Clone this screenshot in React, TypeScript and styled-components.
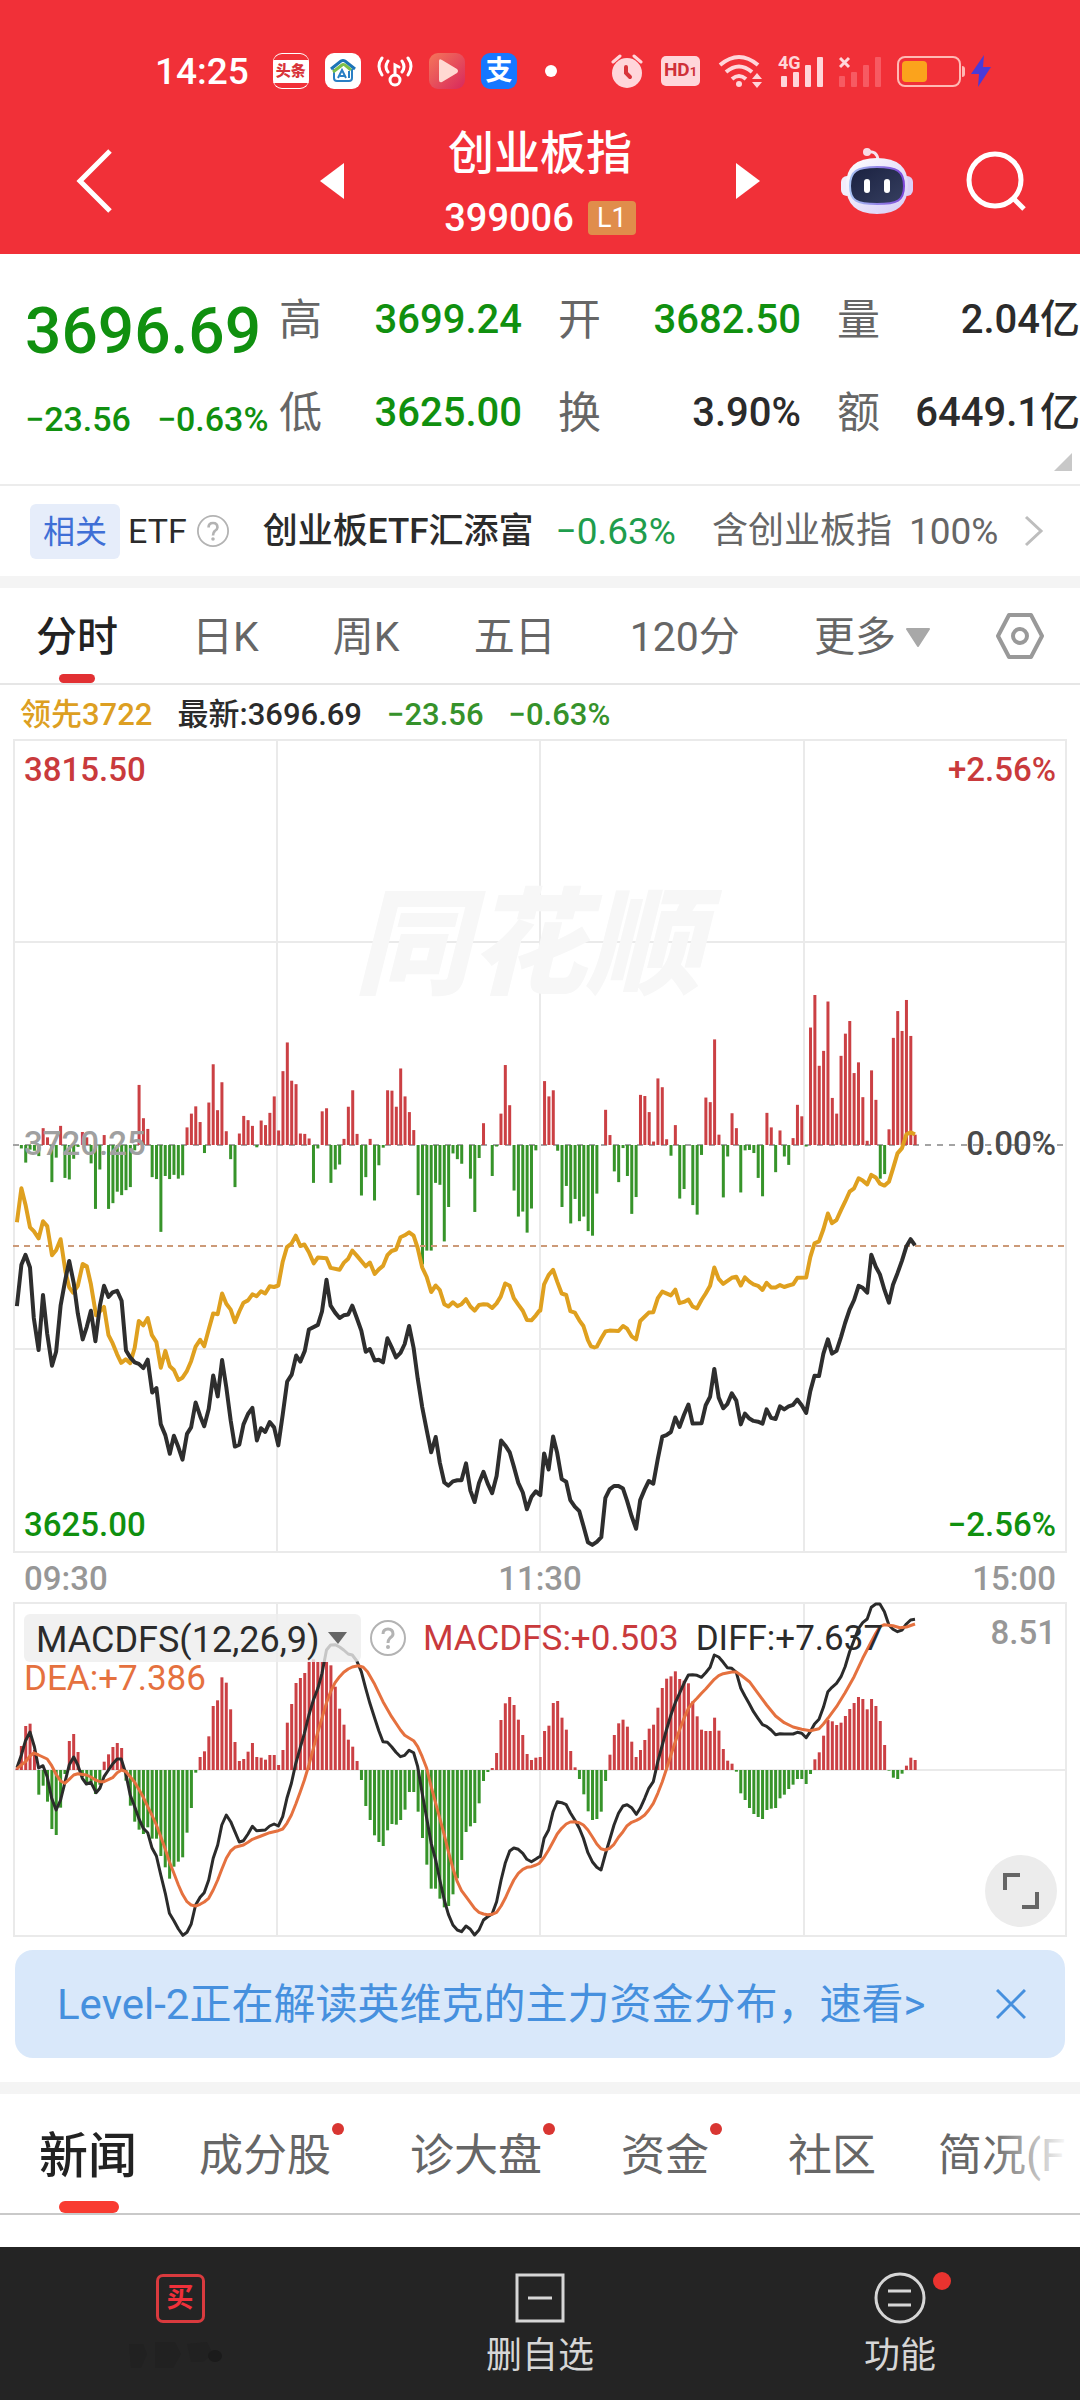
import React from "react";
import styled, { createGlobalStyle } from "styled-components";

const GlobalStyle = createGlobalStyle`
  *, *::before, *::after { box-sizing: border-box; }
  body {
    margin: 0;
    background: #fff;
    color: #2b2b2b;
    font-family: Roboto, "Noto Sans CJK SC", sans-serif;
    line-height: 1;
  }
  button, select, a { font: inherit; color: inherit; }
  button { border: 0; padding: 0; margin: 0; background: none; cursor: pointer; }
  a { text-decoration: none; }
  svg { display: block; flex: none; }
`;

const UP = "#c93a3c";
const DOWN = "#10900f";

/* ---------- chart data ---------- */

// One value per trading minute, in the units of the source feed.
const FLOW = [
  0, -9, -46, -12, -15, -29, 44, 20, -97, -33, 50, -86, -90, -36, -5, 34, 20, -48, -167, -64,
  26, -167, -152, -122, -131, -118, -110, -14, 157, 70, 42, -84, -89, -227, -81, -89, -78, -88, -79, 46,
  82, 101, 60, -21, 111, 211, 91, 164, 36, -37, -110, 30, 76, 65, 50, -6, 64, 52, 84, 127,
  38, 193, 268, 168, 159, 30, 29, 17, -99, -9, 88, 96, -99, -64, -51, 16, 100, 143, 29, -132,
  -84, 16, -145, -53, -7, 143, 142, 100, 200, 127, 86, 39, -131, -312, -276, -276, -99, -104, -252, -162,
  -22, -37, -49, 0, -88, -175, -34, 57, 0, -81, -4, 82, 209, 104, -119, -187, -174, -229, -166, -14,
  0, 167, 127, 143, -15, -162, -107, -205, -141, -199, -187, -225, -237, -127, 0, 92, 26, -69, -97, -8,
  -81, -180, -136, 131, 128, 86, 9, 174, 151, 15, -28, 52, -140, -115, 0, -157, -182, -26, 124, 112,
  276, 27, -137, -30, 83, 44, -124, -14, -13, -21, -86, -134, 84, 46, -71, 38, -30, -52, 18, 105,
  75, -4, 307, 392, 207, 246, 375, 123, 82, 233, 291, 324, 188, 216, 125, 11, 195, 118, -88, -76,
  41, 280, 350, 298, 379, 285, 27,
];

const MACD = [
  5, 72, 132, 139, 60, -74, -47, -95, -177, -195, -113, -12, 87, 108, 54, -22, -45, -38, -72, -44,
  25, 47, 69, 81, 66, -32, -107, -155, -179, -192, -172, -206, -206, -258, -292, -326, -290, -275, -262, -188,
  -114, -8, 39, 56, 101, 192, 209, 278, 262, 182, 84, 27, 33, 55, 81, 39, 37, 31, 45, 45,
  15, 60, 142, 198, 261, 276, 291, 324, 332, 324, 324, 324, 314, 250, 184, 136, 91, 70, 27, -30,
  -108, -150, -196, -216, -228, -181, -162, -164, -150, -119, -66, -66, -125, -204, -284, -356, -356, -386, -412, -408,
  -373, -325, -270, -186, -169, -159, -100, -33, -6, 6, 51, 150, 200, 219, 195, 151, 105, 48, 30, 37,
  39, 117, 133, 201, 207, 157, 121, 57, 8, -27, -73, -124, -150, -147, -125, -33, 46, 105, 140, 151,
  130, 85, 39, 60, 90, 124, 136, 187, 246, 274, 281, 296, 273, 268, 260, 206, 161, 121, 117, 117,
  157, 118, 63, 28, 19, -5, -70, -90, -114, -132, -141, -147, -120, -116, -114, -85, -74, -57, -44, -27,
  -27, -42, -12, 32, 53, 103, 150, 146, 135, 142, 162, 183, 201, 219, 213, 182, 213, 192, 147, 75,
  -2, -23, -27, -11, 13, 37, 30,
];

// Each line is kept as a morning half and an afternoon half of "x,y" pairs.
const LEAD: [string, string] = [
  "49,662 62,573 74,616 87,675 98,685 112,704 125,659 137,672 151,748 163,735 176,706 190,790 201,832 212,846 226,828 240,771 252,777 264,824 279,905 290,895 302,883 315,957 327,978 340,1007 352,1029 365,1020 378,1030 391,990 403,920 416,931 429,912 441,957 454,975 467,1042 480,998 493,1038 505,1048 518,1074 530,1068 543,1050 555,1025 568,987 581,969 593,986 606,942 619,900 632,902 645,848 657,875 670,890 682,923 695,895 707,872 720,866 733,850 745,855 758,842 770,848 783,829 796,831 808,827 821,765 833,727 846,718 859,697 872,724 884,720 897,740 911,769 923,754 948,756 960,781 986,786 998,768 1011,757 1023,736 1036,749 1062,777 1074,767 1088,797 1100,785 1112,776 1125,748 1137,737 1150,733 1163,701 1175,696 1188,688 1201,697 1213,729 1226,780 1239,805 1252,844 1265,827 1277,839 1290,876 1302,882 1315,871 1328,881 1340,876 1353,863 1366,882 1378,893 1391,878 1404,876 1416,877 1429,886 1442,874 1454,856 1467,822 1480,828 1492,860 1505,877 1518,893 1530,917 1543,918 1556,905 1566,893",
  "1,893 12,824 25,800 38,786 50,817 63,848 76,852 88,894 101,898 114,918 126,933 139,970 148,986 158,989 165,987 178,965 190,947 202,945 228,946 241,933 253,940 266,960 279,968 291,920 316,898 329,897 342,860 355,843 380,853 393,838 405,873 418,870 431,864 443,882 456,887 469,865 481,848 494,828 506,780 519,810 532,823 557,807 570,804 583,827 595,806 608,817 620,824 633,828 646,839 658,820 671,832 684,832 697,826 709,831 722,827 735,824 747,807 773,806 785,753 797,717 810,712 823,680 836,639 848,664 861,656 874,630 886,608 899,582 912,573 925,547 937,553 950,563 962,538 975,545 987,561 1000,566 1013,556 1025,522 1038,482 1051,468 1064,432 1076,427 1089,432",
];
const PRICE: [string, string] = [
  "49,881 62,773 74,747 87,780 98,912 112,996 125,852 137,953 151,1037 163,1000 176,880 189,815 201,763 214,820 226,900 240,968 252,935 264,893 277,973 290,880 302,828 315,857 327,845 340,841 353,867 366,997 378,1015 391,1028 403,1032 416,1043 429,1021 442,1107 454,1095 467,1190 480,1218 493,1267 505,1220 518,1250 530,1282 543,1215 555,1198 568,1133 581,1168 593,1195 606,1150 619,1062 632,1117 645,1022 657,1093 670,1180 682,1248 695,1243 707,1190 720,1163 733,1147 746,1232 758,1200 770,1210 783,1184 796,1198 808,1245 821,1165 834,1078 847,1060 860,1010 872,1026 885,998 897,942 923,930 935,895 948,812 960,880 973,898 986,912 998,905 1011,903 1023,880 1036,912 1049,945 1062,1000 1074,993 1088,1023 1100,1021 1112,1028 1125,965 1137,988 1150,1015 1163,1003 1175,980 1188,933 1201,990 1213,1070 1226,1145 1239,1205 1252,1263 1265,1223 1277,1290 1290,1342 1302,1350 1315,1339 1328,1336 1340,1336 1353,1292 1366,1363 1378,1393 1391,1343 1404,1314 1416,1345 1429,1370 1442,1325 1455,1232 1467,1245 1480,1263 1492,1300 1505,1343 1518,1368 1530,1412 1543,1380 1556,1365 1566,1373",
  "1,1375 12,1266 25,1308 38,1222 50,1265 63,1333 76,1340 88,1388 101,1405 114,1417 126,1455 139,1498 152,1505 165,1497 178,1485 190,1382 202,1360 215,1351 228,1351 241,1358 253,1390 266,1430 279,1463 291,1388 304,1360 316,1338 329,1345 342,1280 355,1222 367,1218 380,1210 393,1172 405,1197 418,1165 431,1138 443,1188 469,1187 481,1140 494,1118 506,1045 519,1120 532,1148 544,1137 557,1109 570,1128 583,1190 595,1162 608,1175 620,1181 633,1183 646,1188 658,1151 671,1173 684,1176 697,1143 709,1151 722,1143 735,1139 747,1125 760,1140 773,1160 785,1103 797,1063 810,1064 823,1005 836,968 848,1005 861,998 874,962 886,925 899,890 912,865 925,828 937,833 950,846 962,747 975,778 987,798 1000,838 1013,872 1025,825 1038,795 1051,762 1064,725 1076,706 1089,722",
];
const DIFF: [string, string] = [
  "49,803 62,765 74,722 87,696 100,740 112,804 125,797 137,830 150,895 163,930 176,900 188,850 201,795 214,771 226,795 239,835 251,852 264,847 279,878 290,865 302,830 315,810 327,792 340,777 352,777 365,820 378,885 391,920 403,955 416,985 429,998 441,1043 454,1068 467,1125 480,1180 492,1240 505,1262 518,1287 531,1306 543,1297 555,1273 568,1215 581,1192 593,1178 606,1140 619,1075 632,1035 644,975 657,945 670,965 682,995 695,1026 707,1022 720,1002 733,979 745,992 770,990 783,978 796,972 808,978 821,950 833,895 846,850 859,790 872,742 884,700 897,645 910,600 923,565 935,520 948,450 960,435 973,434 986,441 998,450 1011,462 1023,465 1036,483 1049,515 1062,565 1074,610 1088,655 1100,692 1112,725 1125,727 1137,740 1150,757 1163,770 1175,766 1188,751 1201,758 1213,800 1226,880 1239,955 1252,1030 1265,1080 1277,1140 1290,1200 1302,1243 1315,1275 1328,1290 1340,1295 1353,1278 1366,1288 1378,1305 1391,1290 1404,1260 1416,1250 1429,1242 1442,1205 1455,1140 1467,1090 1480,1053 1492,1044 1505,1048 1518,1060 1530,1078 1543,1085 1556,1077 1566,1070",
  "1,1070 12,1015 25,990 38,935 50,905 63,908 76,914 88,938 101,960 114,985 126,1015 139,1058 152,1085 165,1102 177,1110 190,1062 202,1020 215,975 228,940 241,918 253,914 266,923 280,943 291,925 304,895 316,865 329,845 342,785 355,735 367,690 380,645 393,608 405,580 418,550 431,525 443,524 456,526 469,532 481,518 494,502 506,465 519,471 532,487 544,503 557,505 570,517 583,565 595,588 608,612 620,635 633,655 646,674 658,679 671,690 684,704 697,701 709,702 735,702 747,697 760,700 773,713 785,695 797,672 810,658 823,622 836,575 848,562 861,550 874,530 886,500 899,455 912,420 925,385 937,368 950,357 962,322 975,312 987,312 1000,335 1013,375 1025,388 1038,395 1051,390 1064,372 1076,360 1089,358",
];
const DEA: [string, string] = [
  "49,806 74,785 87,768 98,759 112,765 137,777 150,797 163,823 176,843 188,850 201,838 214,825 226,821 251,825 264,831 277,840 290,845 302,845 327,833 340,818 353,810 366,815 378,830 391,847 403,868 416,892 429,920 441,945 454,975 467,1010 480,1048 492,1085 505,1120 518,1155 530,1183 543,1205 555,1215 568,1218 581,1213 593,1206 606,1195 619,1170 632,1140 644,1108 657,1075 670,1053 682,1042 707,1035 720,1027 733,1018 758,1008 783,998 808,992 821,987 833,970 846,945 859,912 872,875 884,840 897,795 910,745 923,695 935,655 948,608 960,575 973,548 986,530 998,517 1011,507 1023,501 1040,497 1055,502 1067,515 1088,553 1112,605 1137,650 1163,690 1175,706 1188,714 1201,722 1213,740 1226,770 1239,805 1252,860 1265,910 1277,955 1290,1005 1302,1055 1315,1105 1328,1145 1340,1172 1353,1190 1366,1208 1378,1225 1391,1237 1404,1242 1416,1244 1429,1243 1442,1237 1455,1218 1467,1195 1480,1165 1492,1140 1505,1120 1518,1108 1530,1102 1543,1100 1556,1095 1566,1090",
  "12,1072 25,1050 38,1025 50,1002 63,985 76,972 88,966 101,965 114,968 126,975 139,990 152,1010 165,1032 177,1046 190,1050 202,1045 215,1033 228,1012 241,995 253,977 266,967 280,961 291,955 304,945 316,930 329,910 342,880 355,845 367,808 380,765 393,725 405,690 418,655 431,625 443,608 456,595 469,580 481,567 494,552 506,538 519,527 532,521 557,516 570,516 583,525 608,545 633,580 658,615 684,648 709,668 735,681 760,688 785,692 810,686 823,672 836,655 861,620 886,578 912,530 937,475 962,425 975,400 987,380 1000,374 1025,377 1045,383 1064,381 1089,372",
];

const UNIT_X = 540 / 1568;
const HALF_DAY = 1568;

function toPoints(halves: [string, string], unitY: number, shiftY: number) {
  return halves
    .flatMap((half, h) =>
      half.split(" ").map((pair) => {
        const [x, y] = pair.split(",").map(Number);
        const px = (x + h * HALF_DAY) * UNIT_X - 13;
        return `${px.toFixed(1)},${(y * unitY + shiftY).toFixed(1)}`;
      })
    )
    .join(" ");
}

function Bars({ data, base, unit, width }: { data: number[]; base: number; unit: number; width: number }) {
  return (
    <g>
      {data.map((v, i) => {
        const h = Math.abs(v) * unit;
        if (!h) return null;
        return (
          <rect
            key={i}
            x={(4 + 4.36 * i - width / 2).toFixed(2)}
            y={(v > 0 ? base - h : base).toFixed(2)}
            width={width}
            height={h.toFixed(2)}
            fill={v > 0 ? "#cb4044" : "#37942a"}
          />
        );
      })}
    </g>
  );
}

/* ---------- status bar ---------- */

const TopArea = styled.header`
  background: #f13038;
  color: #fff;
`;

const StatusBar = styled.div`
  display: flex;
  align-items: center;
  justify-content: space-between;
  height: 120px;
  padding: 22px 89px 0 155px;
`;

const StatusGroup = styled.div<{ $gap: number }>`
  display: flex;
  align-items: center;
  gap: ${(p) => p.$gap}px;
`;

const Clock = styled.time`
  margin-right: 8px;
  font-size: 37px;
  font-weight: 500;
`;

const AppIcon = styled.span<{ $bg: string; $lined?: boolean }>`
  display: grid;
  place-items: center;
  width: 36px;
  height: 36px;
  border-radius: 9px;
  overflow: hidden;
  background: ${(p) => p.$bg};
  ${(p) => p.$lined && "box-shadow: inset 0 1px #fff, inset 0 -1px #fff;"}
`;

const Headline = styled.span`
  width: 36px;
  background: #fff;
  color: #d8343a;
  font-size: 15px;
  font-weight: 900;
  line-height: 23px;
  text-align: center;
`;

const PayGlyph = styled.span`
  font-size: 27px;
  font-weight: 700;
  line-height: 32px;
`;

const MoreDot = styled.span`
  width: 12px;
  height: 12px;
  margin-left: 12px;
  border-radius: 50%;
  background: #fff;
`;

const HdBadge = styled.span`
  width: 39px;
  margin: 0 3px;
  border-radius: 5px;
  background: #ffd6da;
  color: #cf3038;
  font-size: 19px;
  font-weight: 700;
  line-height: 28px;
  text-align: center;
  small { font-size: 13px; }
`;

/* ---------- title bar ---------- */

const TitleBar = styled.div`
  display: flex;
  align-items: center;
  justify-content: space-between;
  height: 134px;
  padding: 0 53px 12px 76px;
`;

const Side = styled.div<{ $end?: boolean }>`
  display: flex;
  flex: 1 0 0;
  align-items: center;
  gap: 53px;
  justify-content: ${(p) => (p.$end ? "flex-end" : "flex-start")};
`;

const StockSwitch = styled.div`
  display: flex;
  align-items: center;
  gap: 100px;
  margin-left: -23px;
`;

const StockTitle = styled.div`
  display: flex;
  flex-direction: column;
  align-items: center;
  gap: 22px;
`;

const StockName = styled.h1`
  margin: 0;
  font-size: 46px;
  font-weight: 500;
  line-height: 52px;
`;

const StockCode = styled.div`
  display: flex;
  align-items: center;
  gap: 14px;
  height: 34px;
  font-size: 38px;
  font-weight: 500;
`;

const LevelBadge = styled.span`
  width: 48px;
  border-radius: 4px;
  background: #e08d4b;
  font-size: 27px;
  font-weight: 400;
  line-height: 34px;
  text-align: center;
`;

/* ---------- quote ---------- */

const Quote = styled.section`
  display: flex;
  position: relative;
  height: 232px;
  border-bottom: 2px solid #ececec;
`;

const PriceBlock = styled.div`
  flex: none;
  width: 279px;
  padding: 46px 0 0 25px;
  color: ${DOWN};
`;

const Price = styled.div`
  font-size: 64px;
  font-weight: 500;
  line-height: 64px;
`;

const Changes = styled.div`
  display: flex;
  gap: 26px;
  margin-top: 38px;
  font-size: 34px;
  font-weight: 500;
  line-height: 34px;
`;

const Stats = styled.dl`
  display: grid;
  flex: 1;
  grid-template-columns: repeat(3, 1fr);
  align-content: start;
  gap: 45px 36px;
  margin: 0;
  padding-top: 42px;
`;

const Stat = styled.div`
  display: flex;
  justify-content: space-between;
  line-height: 48px;
  white-space: nowrap;
  dt { color: #666; font-size: 43px; }
`;

const StatValue = styled.dd<{ $color?: string }>`
  margin: 0;
  color: ${(p) => p.$color ?? "#2b2b2b"};
  font-size: 40px;
  font-weight: 500;
`;

const Corner = styled.svg`
  position: absolute;
  right: 8px;
  bottom: 13px;
`;

/* ---------- related ETF ---------- */

const EtfRow = styled.a`
  display: flex;
  align-items: center;
  height: 90px;
  padding: 0 36px 0 30px;
  font-size: 37px;
  white-space: nowrap;
`;

const Tag = styled.span`
  padding: 2px 13px 0;
  border-radius: 6px;
  background: #e6edfa;
  color: #3f6fd6;
  font-size: 32px;
  line-height: 53px;
`;

const EtfKind = styled.span`
  margin: 0 10px 0 8px;
  font-size: 34px;
`;

const EtfName = styled.span`
  margin-left: 34px;
  font-size: 35px;
  font-weight: 500;
`;

const EtfChange = styled.span`
  margin-left: 22px;
  color: #1f9d4d;
`;

const EtfNote = styled.span`
  display: flex;
  gap: 17px;
  margin: 0 auto 0 36px;
  color: #666;
  span:first-child { font-size: 36px; }
`;

const Divider = styled.div`
  height: 12px;
  background: #f4f4f4;
`;

/* ---------- period tabs ---------- */

const PeriodTabs = styled.nav`
  display: flex;
  align-items: center;
  justify-content: space-between;
  height: 97px;
  padding: 0 36px;
  border-bottom: 2px solid #e6e6e6;
`;

const PeriodTab = styled.button<{ $active?: boolean }>`
  display: flex;
  position: relative;
  align-items: center;
  gap: 10px;
  height: 95px;
  padding-top: 3px;
  color: ${(p) => (p.$active ? "#222" : "#666")};
  font-size: 41px;
  font-weight: ${(p) => (p.$active ? 500 : 400)};
  &:last-child { margin-left: -8px; padding-top: 0; }
  &::after {
    content: "";
    display: ${(p) => (p.$active ? "block" : "none")};
    position: absolute;
    bottom: 0;
    left: 50%;
    width: 36px;
    height: 9px;
    margin-left: -18px;
    border-radius: 5px;
    background: #e23033;
  }
`;

/* ---------- charts ---------- */

const Legend = styled.div`
  display: flex;
  align-items: center;
  gap: 25px;
  height: 54px;
  padding: 5px 20px 0;
  font-size: 31px;
  font-weight: 500;
`;

const Tone = styled.span<{ $color: string }>`
  color: ${(p) => p.$color};
`;

const ChartArea = styled.div`
  padding: 0 13px;
`;

const Plot = styled.div`
  position: relative;
  svg.plot { width: 100%; height: auto; overflow: visible; }
`;

const Watermark = styled.span`
  position: absolute;
  top: 206px;
  left: 0;
  right: 24px;
  transform: translateY(-50%);
  color: #f7f7f7;
  font-size: 116px;
  font-style: italic;
  font-weight: 900;
  text-align: center;
`;

const AxisLabel = styled.span<{ $color: string; $v: "top" | "middle" | "bottom"; $right?: boolean }>`
  position: absolute;
  ${(p) => (p.$right ? "right: 11px;" : "left: 11px;")}
  ${(p) => (p.$v === "top" ? "top: 14px;" : p.$v === "bottom" ? "bottom: 12px;" : "top: calc(50% - 19px);")}
  color: ${(p) => p.$color};
  font-size: 33px;
  font-weight: 500;
`;

const TimeAxis = styled.div`
  display: flex;
  align-items: center;
  justify-content: space-between;
  height: 49px;
  padding: 2px 11px 0;
  color: #979797;
  font-size: 33px;
  font-weight: 500;
`;

const Readings = styled.div`
  display: flex;
  position: absolute;
  top: 12px;
  left: 11px;
  right: 100px;
  flex-wrap: wrap;
  align-items: center;
  font-size: 35px;
  line-height: 48px;
`;

const IndicatorPicker = styled.label`
  display: flex;
  align-items: center;
  width: 337px;
  height: 48px;
  margin-right: 9px;
  padding: 0 14px 0 12px;
  border-radius: 6px;
  background: rgba(238, 238, 238, 0.8);
  select {
    flex: 1;
    min-width: 0;
    height: 48px;
    padding: 2px 0 0;
    border: 0;
    appearance: none;
    background: none;
    color: #2b2b2b;
    font-size: 36px;
  }
`;

const Reading = styled.output<{ $color: string; $row?: boolean }>`
  flex: ${(p) => (p.$row ? "0 0 100%" : "none")};
  margin-left: ${(p) => (p.$row ? 0 : 17)}px;
  padding-top: 2px;
  color: ${(p) => p.$color};
  line-height: ${(p) => (p.$row ? 30 : 46)}px;
`;

const ScaleLabel = styled.span`
  position: absolute;
  top: 14px;
  right: 11px;
  color: #979797;
  font-size: 33px;
  font-weight: 500;
`;

const ExpandButton = styled.button`
  display: grid;
  position: absolute;
  right: 10px;
  bottom: 10px;
  width: 72px;
  height: 72px;
  place-items: center;
  border-radius: 50%;
  background: #ececec;
`;

/* ---------- banner ---------- */

const Banner = styled.aside`
  display: flex;
  align-items: center;
  justify-content: space-between;
  height: 108px;
  margin: 13px 15px 24px;
  padding: 0 39px 0 42px;
  border-radius: 18px;
  background: #d9e8fa;
  color: #4690de;
  font-size: 42px;
  white-space: nowrap;
  a { padding-top: 2px; }
`;

/* ---------- news tabs ---------- */

const NewsTabs = styled.nav`
  display: flex;
  position: relative;
  gap: 62px;
  height: 121px;
  padding-left: 39px;
  overflow: hidden;
  border-bottom: 2px solid #c9c9c9;
  &::after {
    content: "";
    position: absolute;
    top: 0;
    right: 0;
    width: 90px;
    height: 117px;
    background: linear-gradient(90deg, rgba(255, 255, 255, 0), #fff 88%);
  }
`;

const NewsTab = styled.button<{ $active?: boolean; $dot?: boolean }>`
  position: relative;
  flex: none;
  height: 119px;
  padding: 5px ${(p) => (p.$dot ? 17 : 0)}px 0 0;
  color: ${(p) => (p.$active ? "#222" : "#666")};
  font-size: ${(p) => (p.$active ? 49 : 44)}px;
  font-weight: ${(p) => (p.$active ? 500 : 400)};
  white-space: nowrap;
  &::before {
    content: "";
    display: ${(p) => (p.$dot ? "block" : "none")};
    position: absolute;
    top: 29px;
    right: 4px;
    width: 12px;
    height: 12px;
    border-radius: 50%;
    background: #d93632;
  }
  &::after {
    content: "";
    display: ${(p) => (p.$active ? "block" : "none")};
    position: absolute;
    bottom: 0;
    left: 50%;
    width: 60px;
    height: 12px;
    margin-left: -29px;
    border-radius: 6px;
    background: #f93b31;
  }
`;

/* ---------- bottom bar ---------- */

const Page = styled.div`
  display: flex;
  flex-direction: column;
  min-height: 100vh;
  overflow-x: hidden;
`;

const Main = styled.main`
  flex: 1;
`;

const BottomBar = styled.nav`
  display: grid;
  grid-template-columns: repeat(3, 1fr);
  height: 153px;
  background: #242424;
`;

const BottomItem = styled.button`
  display: flex;
  flex-direction: column;
  align-items: center;
  gap: 12px;
  padding-top: 25px;
  color: #d6d6d6;
  font-size: 36px;
  line-height: 40px;
`;

const BottomIcon = styled.span`
  display: grid;
  position: relative;
  width: 52px;
  height: 52px;
  place-items: center;
`;

const BuyGlyph = styled.span`
  width: 49px;
  border: 3px solid #d93a3e;
  border-radius: 7px;
  color: #f0303a;
  font-size: 27px;
  font-weight: 700;
  line-height: 43px;
  text-align: center;
`;

const NoticeDot = styled.i`
  position: absolute;
  top: 0;
  right: -25px;
  width: 18px;
  height: 18px;
  border-radius: 50%;
  background: #ea332f;
`;

/* ---------- icons ---------- */

const HomeAiIcon = () => (
  <svg width="28" height="28" viewBox="0 0 28 28" fill="none">
    <path d="M5 12v9q0 3 3 3h12q3 0 3-3v-9" stroke="#2a7fc4" strokeWidth="2" />
    <path d="M2 12 12 4q2-1 4 0l10 8" stroke="#1c74b8" strokeWidth="3" />
    <path d="M4 15l9-7q1-1 3 0l6 5" stroke="#7cc04b" strokeWidth="3" />
    <path d="m9 21 4-8 4 8M11 19h5M20 14v7" stroke="#2a7fc4" strokeWidth="2" />
  </svg>
);

const CastKeyIcon = () => (
  <svg width="36" height="32" viewBox="0 0 36 32" fill="none" stroke="#fff" strokeWidth="3" strokeLinecap="round">
    <path d="M5 3q-6 8 0 17M31 3q6 8 0 17M11 6q-4 6 0 11M25 6q4 6 0 11" />
    <circle cx="18" cy="25" r="5" />
    <path d="M18 20V10l4 2" />
  </svg>
);

const PlayIcon = () => (
  <svg width="36" height="36" viewBox="0 0 36 36">
    <path d="M10 8q0-3 3-1l15 9q2 2 0 4l-15 9q-3 1-3-2z" fill="#ffd9d2" />
  </svg>
);

const AlarmIcon = () => (
  <svg width="32" height="34" viewBox="0 0 32 34">
    <circle cx="16" cy="19" r="15" fill="#ffd6da" />
    <path d="M2 8l7-6M30 8l-7-6" stroke="#ffd6da" strokeWidth="3" strokeLinecap="round" />
    <path d="M15 13v6l4 4" fill="none" stroke="#d8343a" strokeWidth="4" strokeLinecap="round" />
  </svg>
);

const WifiIcon = () => (
  <svg width="45" height="34" viewBox="0 0 45 34" fill="none" stroke="#ffd6da" strokeWidth="4">
    <path d="M2 11q19-16 38 0M8 18q13-11 26 0M14 25q7-6 14 0" />
    <circle cx="21" cy="30" r="3" fill="#ffd6da" stroke="none" />
    <path d="m39 19 5 6H34zM39 34l5-6H34z" fill="#ffd6da" stroke="none" />
  </svg>
);

const SignalIcon = () => (
  <svg width="46" height="38" viewBox="0 -4 46 38" fill="#ffd6da" overflow="visible">
    <rect x="3" y="20" width="6" height="11" rx="1" />
    <rect x="15" y="16" width="6" height="15" rx="1" />
    <rect x="27" y="9" width="6" height="22" rx="1" />
    <rect x="39" y="1" width="6" height="30" rx="1" />
    <text x="0" y="13" fontSize="18" fontWeight="700" fontFamily="Roboto, sans-serif">4G</text>
  </svg>
);

const NoSignalIcon = () => (
  <svg width="43" height="34" viewBox="0 0 43 34">
    <g fill="#f75a62">
      <rect x="0" y="22" width="6" height="11" rx="1" />
      <rect x="12" y="18" width="6" height="15" rx="1" />
      <rect x="24" y="11" width="6" height="22" rx="1" />
      <rect x="36" y="3" width="6" height="30" rx="1" />
    </g>
    <path d="m1 4 9 9M10 4l-9 9" stroke="#ffd6da" strokeWidth="3" />
  </svg>
);

const BatteryIcon = () => (
  <svg width="94" height="34" viewBox="0 0 94 34">
    <rect x="1" y="3" width="62" height="29" rx="7" fill="none" stroke="#ffb9b4" strokeWidth="2" />
    <rect x="5" y="7" width="25" height="21" rx="4" fill="#fba31c" />
    <path d="M65 12q3 0 3 3v5q0 3-3 3z" fill="#ffb9b4" />
    <path d="M87 1 74 20h8l-1 13 13-20h-8z" fill="#4a3bd8" />
  </svg>
);

const RobotIcon = () => (
  <svg width="72" height="67" viewBox="0 0 72 67">
    <defs>
      <linearGradient id="shell" x1="0" y1="0" x2="1" y2="1">
        <stop offset="0" stopColor="#fff" />
        <stop offset=".5" stopColor="#e9e4fb" />
        <stop offset="1" stopColor="#d6ccf6" />
      </linearGradient>
      <linearGradient id="face" x1="0" y1="0" x2="1" y2="1">
        <stop offset="0" stopColor="#1a2140" />
        <stop offset="1" stopColor="#363f60" />
      </linearGradient>
      <linearGradient id="rim" x1="0" y1="0" x2="1" y2="0">
        <stop offset="0" stopColor="#a9c4f4" />
        <stop offset="1" stopColor="#7b46d8" />
      </linearGradient>
    </defs>
    <path d="M26 4q10-2 11 8" fill="none" stroke="#f6e2ee" strokeWidth="3" />
    <circle cx="26" cy="4" r="4" fill="#f8dbe6" />
    <rect x="0" y="28" width="12" height="20" rx="6" fill="#f1ecfb" />
    <rect x="60" y="28" width="12" height="20" rx="6" fill="#dccff7" />
    <path d="M36 10q31 0 31 27 0 29-31 29T5 37q0-27 31-27z" fill="url(#shell)" />
    <path d="M36 19c20 0 27 4 27 19s-7 18-27 18S9 53 9 38s7-19 27-19z" fill="url(#face)" stroke="url(#rim)" strokeWidth="2" />
    <rect x="23" y="31" width="6" height="14" rx="3" fill="#fff" />
    <rect x="43" y="31" width="6" height="14" rx="3" fill="#fff" />
  </svg>
);

const HelpIcon = ({ size }: { size: number }) => (
  <svg width={size} height={size} viewBox="0 0 36 36" fill="none" stroke="#b3b3b3" strokeWidth="2">
    <circle cx="18" cy="18" r="17" />
    <path d="M13 14q0-5 5-5t5 5q0 2-3 4-2 2-2 5" strokeWidth="3" />
    <circle cx="18" cy="27" r="2" fill="#b3b3b3" stroke="none" />
  </svg>
);

const GRID_X = [1, 264, 527, 791, 1053];

function PricePlot() {
  return (
    <svg className="plot" viewBox="0 0 1054 814" role="img" aria-label="分时">
      <g stroke="#eaeaea" strokeWidth="2">
        {GRID_X.map((x) => <path key={x} d={`M${x} 0V814`} />)}
        {[1, 203, 610, 813].map((y) => <path key={y} d={`M0 ${y}H1054`} />)}
      </g>
      <path d="M0 406H1054" stroke="#a3a3a3" strokeWidth="2" strokeDasharray="6 6" />
      <Bars data={FLOW} base={406} unit={600 / 1568} width={3} />
      <path d="M0 507H1054" stroke="#cc9a78" strokeWidth="2" strokeDasharray="6 5" />
      <g fill="none" strokeWidth="4" strokeLinejoin="round">
        <polyline points={toPoints(LEAD, 600 / 1568, 230)} stroke="#dfa01f" />
        <polyline points={toPoints(PRICE, 600 / 1568, 230)} stroke="#2e2e2e" />
      </g>
    </svg>
  );
}

function MacdPlot() {
  return (
    <svg className="plot" viewBox="0 0 1054 335" role="img" aria-label="MACDFS">
      <g stroke="#eaeaea" strokeWidth="2">
        {GRID_X.map((x) => <path key={x} d={`M${x} 0V335`} />)}
        {[1, 168, 334].map((y) => <path key={y} d={`M0 ${y}H1054`} />)}
      </g>
      <Bars data={MACD} base={168} unit={1 / 3} width={3} />
      <g fill="none" strokeWidth="3" strokeLinejoin="round">
        <polyline points={toPoints(DIFF, 1 / 3, -102)} stroke="#2b2b2b" />
        <polyline points={toPoints(DEA, 1 / 3, -102)} stroke="#e5713f" />
      </g>
    </svg>
  );
}

const STATS = [
  { label: "高", value: "3699.24", color: DOWN },
  { label: "开", value: "3682.50", color: DOWN },
  { label: "量", value: "2.04亿" },
  { label: "低", value: "3625.00", color: DOWN },
  { label: "换", value: "3.90%" },
  { label: "额", value: "6449.1亿" },
];

const NEWS = [
  { label: "新闻", active: true },
  { label: "成分股", dot: true },
  { label: "诊大盘", dot: true },
  { label: "资金", dot: true },
  { label: "社区" },
  { label: "简况(F" },
];

export default function App() {
  return (
    <Page>
      <GlobalStyle />
      <TopArea>
        <StatusBar>
          <StatusGroup $gap={16}>
            <Clock>14:25</Clock>
            <AppIcon $bg="transparent" $lined><Headline>头条</Headline></AppIcon>
            <AppIcon $bg="#fff"><HomeAiIcon /></AppIcon>
            <CastKeyIcon />
            <AppIcon $bg="linear-gradient(135deg, #f5765a, #d8285c)"><PlayIcon /></AppIcon>
            <AppIcon $bg="#1677ff"><PayGlyph>支</PayGlyph></AppIcon>
            <MoreDot />
          </StatusGroup>
          <StatusGroup $gap={15}>
            <AlarmIcon />
            <HdBadge>HD<small>1</small></HdBadge>
            <WifiIcon />
            <SignalIcon />
            <NoSignalIcon />
            <BatteryIcon />
          </StatusGroup>
        </StatusBar>
        <TitleBar>
          <Side>
            <button aria-label="返回">
              <svg width="37" height="64" viewBox="0 0 37 64" fill="none" stroke="#fff" strokeWidth="5">
                <path d="M34 2 4 32l30 30" />
              </svg>
            </button>
          </Side>
          <StockSwitch>
            <button aria-label="上一只">
              <svg width="24" height="36" viewBox="0 0 24 36" fill="#fff"><path d="M24 0v36L0 18z" /></svg>
            </button>
            <StockTitle>
              <StockName>创业板指</StockName>
              <StockCode>399006<LevelBadge>L1</LevelBadge></StockCode>
            </StockTitle>
            <button aria-label="下一只">
              <svg width="24" height="36" viewBox="0 0 24 36" fill="#fff"><path d="M0 0v36l24-18z" /></svg>
            </button>
          </StockSwitch>
          <Side $end>
            <button aria-label="智能助手"><RobotIcon /></button>
            <button aria-label="搜索">
              <svg width="61" height="61" viewBox="0 0 61 61" fill="none" stroke="#fff" strokeWidth="5">
                <circle cx="29" cy="29" r="26" />
                <path d="m47 47 11 11" />
              </svg>
            </button>
          </Side>
        </TitleBar>
      </TopArea>

      <Main>
        <Quote>
          <PriceBlock>
            <Price>3696.69</Price>
            <Changes><span>−23.56</span><span>−0.63%</span></Changes>
          </PriceBlock>
          <Stats>
            {STATS.map((s) => (
              <Stat key={s.label}>
                <dt>{s.label}</dt>
                <StatValue $color={s.color}>{s.value}</StatValue>
              </Stat>
            ))}
          </Stats>
          <Corner width="18" height="18" viewBox="0 0 18 18" fill="#c8c8c8"><path d="M18 0v18H0z" /></Corner>
        </Quote>

        <EtfRow href="#etf">
          <Tag>相关</Tag>
          <EtfKind>ETF</EtfKind>
          <HelpIcon size={32} />
          <EtfName>创业板ETF汇添富</EtfName>
          <EtfChange>−0.63%</EtfChange>
          <EtfNote><span>含创业板指</span><span>100%</span></EtfNote>
          <svg width="20" height="32" viewBox="0 0 20 32" fill="none" stroke="#bdbdbd" strokeWidth="3">
            <path d="m2 2 15 14L2 30" />
          </svg>
        </EtfRow>
        <Divider />

        <PeriodTabs>
          <PeriodTab $active>分时</PeriodTab>
          <PeriodTab>日K</PeriodTab>
          <PeriodTab>周K</PeriodTab>
          <PeriodTab>五日</PeriodTab>
          <PeriodTab>120分</PeriodTab>
          <PeriodTab aria-haspopup="menu">
            更多
            <svg width="24" height="19" viewBox="0 0 24 19" fill="#a8a8a8" stroke="#a8a8a8" strokeWidth="2" strokeLinejoin="round">
              <path d="M1 1h22L12 18z" />
            </svg>
          </PeriodTab>
          <PeriodTab aria-label="设置">
            <svg width="48" height="46" viewBox="0 0 48 46" fill="none" stroke="#999" strokeWidth="4" strokeLinejoin="round">
              <path d="M13 2h22l11 21-11 21H13L2 23z" />
              <circle cx="24" cy="23" r="7" />
            </svg>
          </PeriodTab>
        </PeriodTabs>

        <Legend>
          <Tone $color="#dd9f22">领先3722</Tone>
          <span>最新:3696.69</span>
          <Tone $color="#36922b">−23.56</Tone>
          <Tone $color="#36922b">−0.63%</Tone>
        </Legend>

        <ChartArea>
          <Plot>
            <Watermark>同花顺</Watermark>
            <PricePlot />
            <AxisLabel $color="#a0a0a0" $v="middle">3720.25</AxisLabel>
            <AxisLabel $color={UP} $v="top">3815.50</AxisLabel>
            <AxisLabel $color={UP} $v="top" $right>+2.56%</AxisLabel>
            <AxisLabel $color="#4a4a4a" $v="middle" $right>0.00%</AxisLabel>
            <AxisLabel $color={DOWN} $v="bottom">3625.00</AxisLabel>
            <AxisLabel $color={DOWN} $v="bottom" $right>−2.56%</AxisLabel>
          </Plot>
          <TimeAxis><span>09:30</span><span>11:30</span><span>15:00</span></TimeAxis>
          <Plot>
            <MacdPlot />
            <Readings>
              <IndicatorPicker>
                <select aria-label="MACDFS"><option>MACDFS(12,26,9)</option></select>
                <svg width="19" height="12" viewBox="0 0 19 12" fill="#666"><path d="M0 0h19L10 12z" /></svg>
              </IndicatorPicker>
              <HelpIcon size={36} />
              <Reading $color={UP}>MACDFS:+0.503</Reading>
              <Reading $color="#2b2b2b">DIFF:+7.637</Reading>
              <Reading $color="#e5713f" $row>DEA:+7.386</Reading>
            </Readings>
            <ScaleLabel>8.51</ScaleLabel>
            <ExpandButton aria-label="全屏">
              <svg width="38" height="38" viewBox="0 0 38 38" fill="none" stroke="#666" strokeWidth="4">
                <path d="M3 18V3h15M20 35h15V20" />
              </svg>
            </ExpandButton>
          </Plot>
        </ChartArea>

        <Banner>
          <a href="#level2">Level-2正在解读英维克的主力资金分布，速看&gt;</a>
          <button aria-label="关闭">
            <svg width="30" height="30" viewBox="0 0 30 30" stroke="#4690de" strokeWidth="3"><path d="m1 1 28 28M29 1 1 29" /></svg>
          </button>
        </Banner>
        <Divider />

        <NewsTabs>
          {NEWS.map((n) => (
            <NewsTab key={n.label} $active={n.active} $dot={n.dot}>{n.label}</NewsTab>
          ))}
        </NewsTabs>
      </Main>

      <BottomBar>
        <BottomItem aria-label="买">
          <BottomIcon><BuyGlyph>买</BuyGlyph></BottomIcon>
          <svg width="110" height="36" viewBox="0 0 110 36" fill="#212121">
            <path d="M4 8h14l4 10-6 14H6zM30 6h20l6 12-8 14H30zM62 8l20-2 6 12-10 8H66z" />
            <ellipse cx="90" cy="20" rx="7" ry="6" fill="#1b1b1b" />
          </svg>
        </BottomItem>
        <BottomItem>
          <BottomIcon>
            <svg width="50" height="50" viewBox="0 0 50 50" fill="none" stroke="#d6d6d6" strokeWidth="3">
              <path d="M2 2h46v46H2zM13 25h24" />
            </svg>
          </BottomIcon>
          删自选
        </BottomItem>
        <BottomItem>
          <BottomIcon>
            <svg width="52" height="52" viewBox="0 0 52 52" fill="none" stroke="#d6d6d6" strokeWidth="3">
              <circle cx="26" cy="26" r="24" />
              <path d="M14 19h23M14 33h23" />
            </svg>
            <NoticeDot />
          </BottomIcon>
          功能
        </BottomItem>
      </BottomBar>
    </Page>
  );
}
